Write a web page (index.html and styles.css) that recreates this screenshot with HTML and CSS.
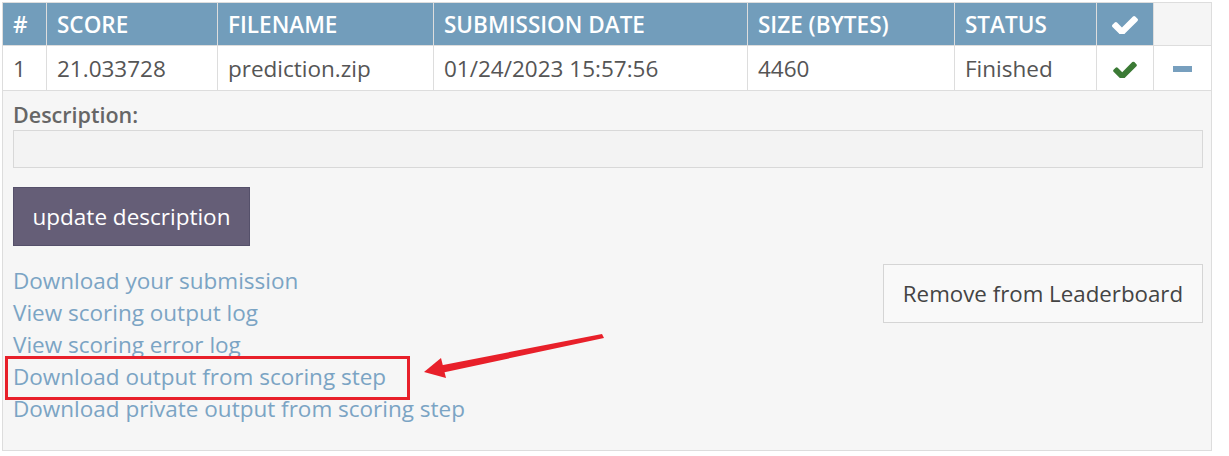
FILE: index.html
```html
<!DOCTYPE html>
<html>
<head>
<meta charset="utf-8">
<link rel="stylesheet" href="styles.css">
</head>
<body>
<div class="page">
  <table class="subs">
    <colgroup>
      <col class="c-num"><col class="c-score"><col class="c-file"><col class="c-date"><col class="c-size"><col class="c-status"><col class="c-check"><col class="c-act">
    </colgroup>
    <thead>
      <tr>
        <th>#</th>
        <th>SCORE</th>
        <th>FILENAME</th>
        <th>SUBMISSION DATE</th>
        <th>SIZE (BYTES)</th>
        <th>STATUS</th>
        <th class="center"><svg class="chk chk-head" viewBox="121 290 1550 1110"><path d="M1671 566q0 40-28 68l-724 724-136 136q-28 28-68 28t-68-28l-136-136-362-362q-28-28-28-68t28-68l136-136q28-28 68-28t68 28l294 295 656-657q28-28 68-28t68 28l136 136q28 28 28 68z"/></svg></th>
        <th class="blank"></th>
      </tr>
    </thead>
    <tbody>
      <tr class="row">
        <td>1</td>
        <td>21.033728</td>
        <td>prediction.zip</td>
        <td>01/24/2023 15:57:56</td>
        <td>4460</td>
        <td>Finished</td>
        <td class="center"><svg class="chk chk-ok" viewBox="121 290 1550 1110"><path d="M1671 566q0 40-28 68l-724 724-136 136q-28 28-68 28t-68-28l-136-136-362-362q-28-28-28-68t28-68l136-136q28-28 68-28t68 28l294 295 656-657q28-28 68-28t68 28l136 136q28 28 28 68z"/></svg></td>
        <td class="center"><span class="minus"></span></td>
      </tr>
      <tr class="details">
        <td colspan="8">
          <div class="panel">
            <label class="desc-label">Description:</label>
            <div class="desc-input"></div>
            <button class="btn-update">update description</button>
            <div class="actions">
              <div class="links">
                <a>Download your submission</a>
                <a>View scoring output log</a>
                <a>View scoring error log</a>
                <a>Download output from scoring step</a>
                <a>Download private output from scoring step</a>
              </div>
              <button class="btn-remove">Remove from Leaderboard</button>
            </div>
          </div>
        </td>
      </tr>
    </tbody>
  </table>

  <div class="highlight"></div>
  <svg class="arrow" viewBox="0 0 1229 456" width="1229" height="456">
    <polygon points="602,334 604,338 441,373 438,366" fill="#e8202a"/>
    <polygon points="424,372 441,358 446,378" fill="#e8202a"/>
  </svg>
</div>
</body>
</html>
```

FILE: styles.css
```css
* { box-sizing: border-box; }

body {
  margin: 0;
  background: #ffffff;
  font-family: "Open Sans", "Noto Sans", sans-serif;
  color: #555555;
}

.page {
  position: relative;
  padding: 2px 0 0 2px;
  width: 1229px;
  height: 456px;
  overflow: hidden;
}

.subs {
  width: 1210px;
  table-layout: fixed;
  border-collapse: collapse;
  border: 1px solid #dddddd;
  font-size: 22.5px;
}

.c-num { width: 44px; }
.c-score { width: 171px; }
.c-file { width: 216px; }
.c-date { width: 314px; }
.c-size { width: 207px; }
.c-status { width: 142px; }
.c-check { width: 57px; }
.c-act { width: 58px; }

.subs th,
.subs td {
  border: 1px solid #dddddd;
  padding: 6px 10px 5px 10px;
  line-height: 31px;
  text-align: left;
  white-space: nowrap;
}

.subs th {
  background: #729dbb;
  color: #ffffff;
  font-weight: 600;
  height: 43px;
}

.subs th.blank {
  background: #f5f5f5;
}

.subs .center {
  text-align: center;
  padding-left: 0;
  padding-right: 0;
}

.row td {
  background: #ffffff;
  color: #555555;
  height: 45px;
}

.chk {
  display: inline-block;
  vertical-align: middle;
}

.chk-head {
  width: 26px;
  height: 19px;
  fill: #ffffff;
  margin-top: -5px;
}

.chk-ok {
  width: 24px;
  height: 17px;
  fill: #3b7a35;
  margin-top: -2px;
}

.minus {
  display: inline-block;
  width: 19px;
  height: 6px;
  background: #779fbe;
  vertical-align: middle;
  margin-top: -3px;
}

.details td {
  padding: 0;
  background: #f6f6f6;
}

.panel {
  display: flex;
  flex-direction: column;
  padding: 10px 8px 25px 10px;
}

.desc-label {
  font-weight: 600;
  color: #666666;
  font-size: 21.5px;
  line-height: 28px;
}

.desc-input {
  margin-top: 1px;
  height: 38px;
  background: #f3f3f3;
  border: 1px solid #d8d8d8;
}

.btn-update {
  margin-top: 19px;
  align-self: flex-start;
  width: 237px;
  height: 59px;
  background: #655e77;
  border: 1px solid #55506a;
  color: #ffffff;
  font-family: "Open Sans", "Noto Sans", sans-serif;
  font-size: 22.5px;
  padding: 0;
}

.actions {
  margin-top: 18px;
  display: flex;
  justify-content: space-between;
  align-items: flex-start;
}

.links {
  display: flex;
  flex-direction: column;
  margin-top: 1px;
}

.links a {
  color: #7ba4c4;
  font-size: 22.5px;
  line-height: 32px;
  white-space: nowrap;
}

.btn-remove {
  width: 320px;
  height: 59px;
  background: #f9f9f9;
  border: 1px solid #d5d5d5;
  color: #444444;
  font-family: "Open Sans", "Noto Sans", sans-serif;
  font-size: 22.3px;
  padding: 0;
}

.highlight {
  position: absolute;
  left: 5px;
  top: 356px;
  width: 405px;
  height: 44px;
  border: 3px solid #e8202a;
  pointer-events: none;
}

.arrow {
  position: absolute;
  left: 0;
  top: 0;
  pointer-events: none;
}
```
